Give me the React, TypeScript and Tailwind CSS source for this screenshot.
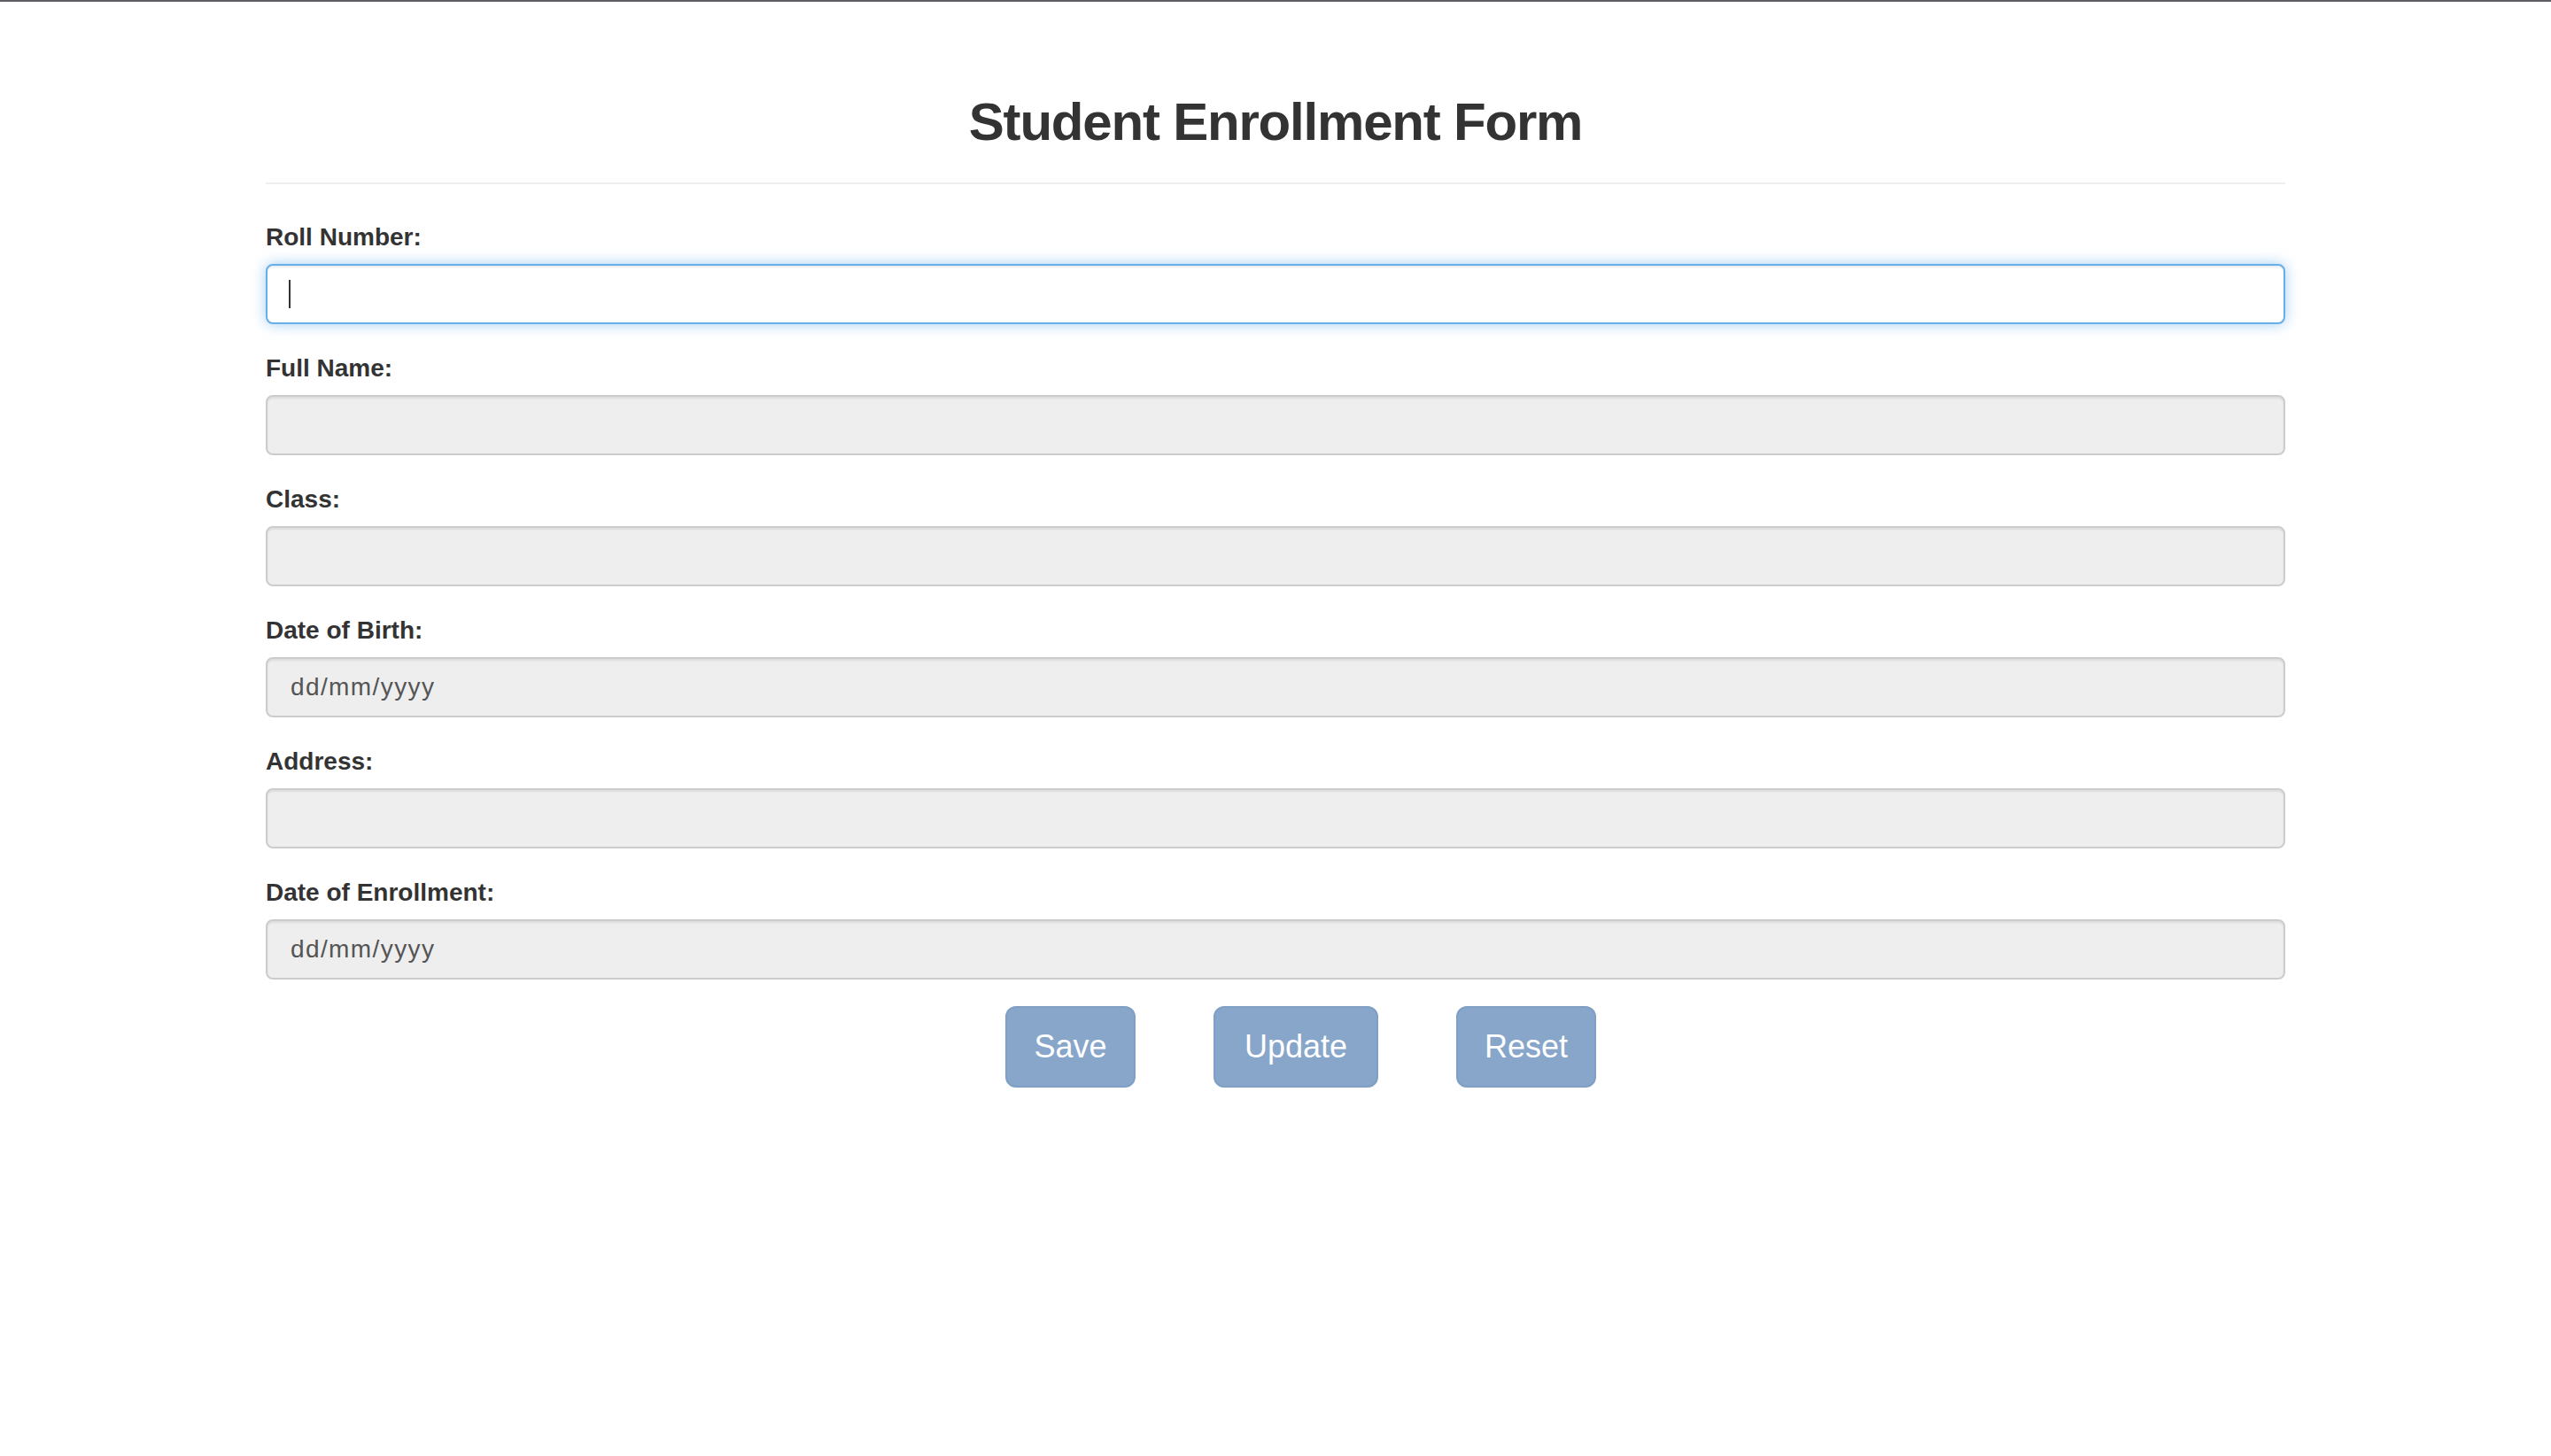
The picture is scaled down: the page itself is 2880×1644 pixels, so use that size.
import React from 'react'

const fields = [
  { label: 'Full Name:', value: '' },
  { label: 'Class:', value: '' },
  { label: 'Date of Birth:', value: 'dd/mm/yyyy' },
  { label: 'Address:', value: '' },
  { label: 'Date of Enrollment:', value: 'dd/mm/yyyy' },
]

function Field({ label, value }: { label: string; value: string }) {
  return (
    <div className="mb-[30px]">
      <label className="block mb-[10px] text-[28px] leading-[40px] font-bold text-[#333]">{label}</label>
      <input
        type="text"
        readOnly
        value={value}
        className="block w-full h-[68px] pl-[26px] pr-[24px] text-[28px] tracking-[1.4px] text-[#555] bg-[#eee] border-2 border-[#ccc] rounded-[8px] shadow-[inset_0_2px_2px_rgba(0,0,0,0.075)] outline-none"
        style={{ fontFamily: 'inherit' }}
      />
    </div>
  )
}

export default function App() {
  return (
    <div className="min-h-screen bg-white text-[#333]" style={{ fontFamily: '"Liberation Sans", Arial, sans-serif' }}>
      <div className="h-[2px] bg-[#5f5f63]" />
      <div className="w-[2280px] mx-auto">
        <div className="pt-[103px] pb-[16px] mb-[40px] border-b-2 border-[#eee]">
          <h2 className="text-center text-[60px] leading-[66px] font-bold tracking-[-1.2px] text-[#333] mb-[19px]">
            Student Enrollment Form
          </h2>
        </div>

        <form onSubmit={e => e.preventDefault()}>
          <div className="mb-[30px]">
            <label className="block mb-[10px] text-[28px] leading-[40px] font-bold text-[#333]">Roll Number:</label>
            <div className="flex items-center w-full h-[68px] px-[24px] bg-white border-2 border-[#66afe9] rounded-[8px] shadow-[inset_0_2px_2px_rgba(0,0,0,0.075),0_0_16px_rgba(102,175,233,0.6)]">
              <span className="block w-[2px] h-[32px] bg-[#333]" />
            </div>
          </div>

          {fields.map(f => (
            <Field key={f.label} label={f.label} value={f.value} />
          ))}

          <div className="flex justify-center gap-[88px] pl-[57px]">
            <button type="button" className="w-[147px] h-[92px] text-[36px] text-white bg-[#87a6ca] border-2 border-[#7f9fc4] rounded-[12px]">
              Save
            </button>
            <button type="button" className="w-[186px] h-[92px] text-[36px] text-white bg-[#87a6ca] border-2 border-[#7f9fc4] rounded-[12px]">
              Update
            </button>
            <button type="button" className="w-[158px] h-[92px] text-[36px] text-white bg-[#87a6ca] border-2 border-[#7f9fc4] rounded-[12px]">
              Reset
            </button>
          </div>
        </form>
      </div>
    </div>
  )
}
